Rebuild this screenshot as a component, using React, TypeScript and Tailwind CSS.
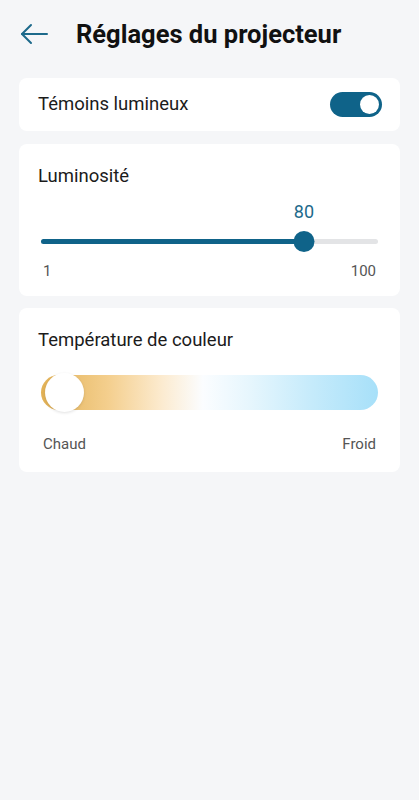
import { useState } from "react";

function BackArrow() {
  return (
    <svg width="28" height="22" viewBox="0 0 28 22" fill="none" stroke="#1d6a8b" strokeWidth="2" strokeLinecap="round" strokeLinejoin="round">
      <path d="M27 11H2" />
      <path d="M11 2L2 11l9 9" />
    </svg>
  );
}

export default function App() {
  const [on, setOn] = useState(true);
  const value = 80;
  const frac = (value - 1) / 99;

  return (
    <div className="min-h-[800px] bg-[#f5f6f8] px-[19px] font-['Roboto',sans-serif] text-[#1b1b1b]">
      <header className="flex h-[68px] items-center">
        <button className="ml-[1px] flex w-[56px] items-center">
          <BackArrow />
        </button>
        <h1 className="text-[25.5px] font-bold text-[#111]">Réglages du projecteur</h1>
      </header>

      <section className="mt-[10px] flex h-[53px] items-center justify-between rounded-lg bg-white pl-[19px] pr-[18px]">
        <span className="text-[18.5px]">Témoins lumineux</span>
        <button
          onClick={() => setOn(!on)}
          className="flex h-[25px] w-[52px] items-center justify-end rounded-full bg-[#0f6389] px-[3px]"
        >
          <span className="h-[19px] w-[19px] rounded-full bg-white" />
        </button>
      </section>

      <section className="mt-[13px] h-[152px] rounded-lg bg-white px-[22px] pt-[20px]">
        <div className="-ml-[3px] text-[18.5px] leading-[24px]">Luminosité</div>
        <div className="relative mt-[12px] h-[24px]">
          <span
            className="absolute top-0 -translate-x-1/2 text-[18px] leading-[24px] text-[#1d6a8b]"
            style={{ left: `calc(10px + (100% - 20px) * ${frac})` }}
          >
            {value}
          </span>
        </div>
        <div className="relative mt-[7px] h-[21px]">
          <div className="absolute left-0 right-0 top-[8px] h-[5px] rounded-full bg-[#e3e4e6]" />
          <div
            className="absolute left-0 top-[8px] h-[5px] rounded-full bg-[#0f6389]"
            style={{ width: `calc(10px + (100% - 20px) * ${frac})` }}
          />
          <div
            className="absolute top-0 h-[21px] w-[21px] -translate-x-1/2 rounded-full bg-[#0f6389]"
            style={{ left: `calc(10px + (100% - 20px) * ${frac})` }}
          />
        </div>
        <div className="mt-[9px] flex justify-between px-[2px] text-[15px] leading-[20px] text-[#555]">
          <span>1</span>
          <span>100</span>
        </div>
      </section>

      <section className="mt-[12px] h-[164px] rounded-lg bg-white px-[22px] pt-[20px]">
        <div className="-ml-[3px] text-[18.5px] leading-[24px]">Température de couleur</div>
        <div className="relative mt-[23px] h-[35px] rounded-full bg-[linear-gradient(to_right,#e2b155_0%,#f4cf8e_20%,#fcebd0_36%,#fbfdff_48%,#e6f6fd_62%,#c6ebfb_80%,#a7e0f9_100%)]">
          <div className="absolute left-[4px] top-[-2px] h-[39px] w-[39px] rounded-full bg-white shadow-[0_1px_3px_rgba(0,0,0,0.12)]" />
        </div>
        <div className="mt-[24px] flex justify-between px-[2px] text-[15px] leading-[20px] text-[#555]">
          <span>Chaud</span>
          <span>Froid</span>
        </div>
      </section>
    </div>
  );
}
